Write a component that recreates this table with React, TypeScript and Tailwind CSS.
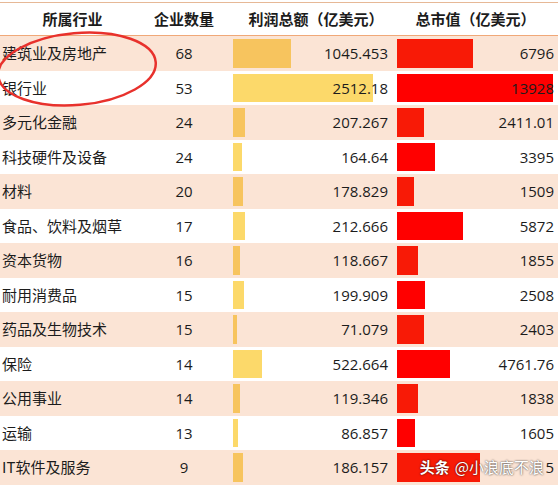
import React from "react";

type Row = { name: string; count: number; profit: string; cap: string; capBar?: number };

const ROWS: Row[] = [
  { name: "建筑业及房地产", count: 68, profit: "1045.453", cap: "6796" },
  { name: "银行业", count: 53, profit: "2512.18", cap: "13928" },
  { name: "多元化金融", count: 24, profit: "207.267", cap: "2411.01" },
  { name: "科技硬件及设备", count: 24, profit: "164.64", cap: "3395" },
  { name: "材料", count: 20, profit: "178.829", cap: "1509" },
  { name: "食品、饮料及烟草", count: 17, profit: "212.666", cap: "5872" },
  { name: "资本货物", count: 16, profit: "118.667", cap: "1855" },
  { name: "耐用消费品", count: 15, profit: "199.909", cap: "2508" },
  { name: "药品及生物技术", count: 15, profit: "71.079", cap: "2403" },
  { name: "保险", count: 14, profit: "522.664", cap: "4761.76" },
  { name: "公用事业", count: 14, profit: "119.346", cap: "1838" },
  { name: "运输", count: 13, profit: "86.857", cap: "1605" },
  { name: "IT软件及服务", count: 9, profit: "186.157", cap: "5", capBar: 83 },
];

const cjk = "font-['Microsoft_YaHei','Noto_Sans_CJK_SC',sans-serif]";
const num = "font-['Open_Sans','Noto_Sans_CJK_SC',sans-serif]";

export default function App() {
  return (
    <div className="relative h-[487px] w-[558px] overflow-hidden bg-white pt-[2px] text-[#1c1c1c]">
      <div className="border-t border-[#e6b896]">
        <div className={`grid h-[33px] grid-cols-[145px_78px_170px_165px] items-center border-b-[1.5px] border-[#f0a878] text-[15px] font-bold ${cjk}`}>
          <div className="text-center">所属行业</div>
          <div className="text-center">企业数量</div>
          <div className="pl-[16px] text-center">利润总额（亿美元）</div>
          <div className="text-center">总市值（亿美元）</div>
        </div>

        {ROWS.map((r, i) => {
          const pink = i % 2 === 0;
          const last = i === ROWS.length - 1;
          return (
            <div
              key={r.name}
              className={`grid h-[34.5px] grid-cols-[145px_78px_170px_165px] items-stretch text-[15px] ${pink ? "bg-[#fbe4d5]" : "bg-white"}`}
            >
              <div className={`flex items-center pl-[2px] ${cjk}`}>{r.name}</div>
              <div className={`flex items-center justify-center ${num}`}>{r.count}</div>
              <div className="grid pl-[10px] pr-[5px]">
                <div className="col-start-1 row-start-1 py-[3px]">
                  <div
                    className={`h-full ${pink ? "bg-[#f7c45e]" : "bg-[#fcd96a]"}`}
                    style={{ width: Math.max(3, parseFloat(r.profit) * 0.0557) }}
                  />
                </div>
                <div className={`col-start-1 row-start-1 flex items-center justify-end ${num}`}>{r.profit}</div>
              </div>
              <div className="relative grid pl-[4px] pr-[4px]">
                <div className="col-start-1 row-start-1 py-[3px]">
                  <div
                    className={`h-full ${pink ? "bg-[#f81a06]" : "bg-[#ff0000]"}`}
                    style={{ width: r.capBar ?? parseFloat(r.cap) * 0.0112 }}
                  />
                </div>
                <div className={`col-start-1 row-start-1 flex items-center justify-end ${num}`}>{r.cap}</div>
                {last && (
                  <div
                    className={`absolute right-[14px] top-[6px] flex items-center gap-[5px] text-[15px] text-white ${cjk} [text-shadow:0_0_2px_rgba(0,0,0,0.9)]`}
                  >
                    <span className="font-bold">头条</span>
                    <span>@小浪底不浪</span>
                  </div>
                )}
              </div>
            </div>
          );
        })}
      </div>

      <svg className="pointer-events-none absolute left-0 top-0" width="170" height="115" viewBox="0 0 170 115">
        <ellipse
          cx="77"
          cy="69"
          rx="79"
          ry="36"
          transform="rotate(-5 77 69)"
          fill="none"
          stroke="#e8312c"
          strokeWidth="2.5"
        />
      </svg>
    </div>
  );
}
